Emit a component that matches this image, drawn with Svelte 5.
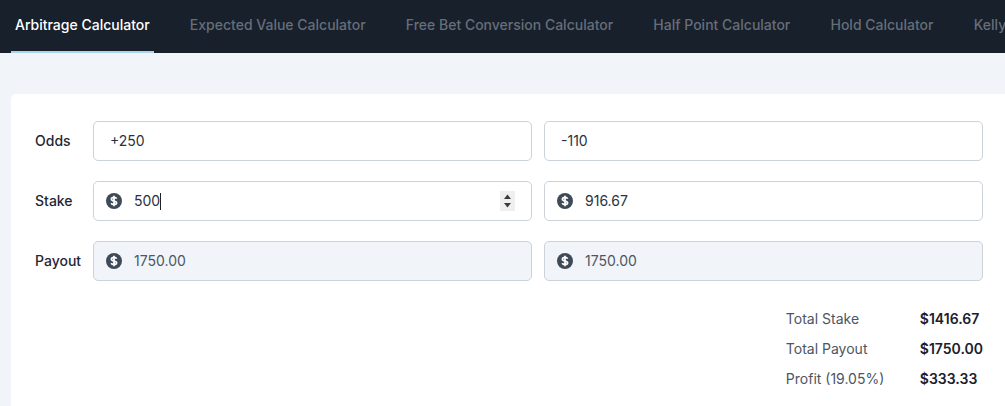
<script lang="ts">
	const tabs = [
		'Arbitrage Calculator',
		'Expected Value Calculator',
		'Free Bet Conversion Calculator',
		'Half Point Calculator',
		'Hold Calculator',
		'Kelly Calculator'
	];

	const rows = [
		{ label: 'Odds', icon: false, disabled: false, values: ['+250', '-110'] },
		{ label: 'Stake', icon: true, disabled: false, values: ['500', '916.67'] },
		{ label: 'Payout', icon: true, disabled: true, values: ['1750.00', '1750.00'] }
	];

	const totals = [
		{ label: 'Total Stake', value: '$1416.67' },
		{ label: 'Total Payout', value: '$1750.00' },
		{ label: 'Profit (19.05%)', value: '$333.33' }
	];
</script>

<nav class="tabs">
	{#each tabs as tab, i}
		<div class="tab" class:active={i === 0}>{tab}</div>
	{/each}
</nav>

<main class="page">
	<section class="card">
		<div class="form">
			{#each rows as row, r}
				<div class="label">{row.label}</div>
				{#each row.values as value, c}
					<div class="field" class:disabled={row.disabled}>
						{#if row.icon}
							<svg class="dollar" viewBox="0 0 16 16" width="16" height="16">
								<circle cx="8" cy="8" r="8" fill="#3f4a59" />
								<path
									d="M10.6 5.8C10.2 4.8 9.2 4.4 8 4.4c-1.5 0-2.6.7-2.6 1.9 0 2.5 5.2 1 5.2 3.5 0 1.2-1.2 1.8-2.6 1.8-1.4 0-2.4-.5-2.8-1.5M8 2.8v10.4"
									fill="none"
									stroke="#fff"
									stroke-width="1.7"
								/>
							</svg>
						{/if}
						<span class="value">{value}</span>
						{#if r === 1 && c === 0}
							<span class="caret"></span>
							<span class="spinner">
								<svg viewBox="0 0 15 20" width="15" height="20">
									<path d="M7.5 3.5 11 8H4z" fill="#3a3a3a" />
									<path d="M7.5 16.5 11 12H4z" fill="#3a3a3a" />
								</svg>
							</span>
						{/if}
					</div>
				{/each}
			{/each}
		</div>

		<div class="totals">
			{#each totals as total}
				<div class="total-label">{total.label}</div>
				<div class="total-value">{total.value}</div>
			{/each}
		</div>
	</section>
</main>

<style>
	:global(body) {
		margin: 0;
		background: #f1f4f9;
		font-family: Inter, 'Liberation Sans', sans-serif;
		overflow: hidden;
	}

	.tabs {
		display: flex;
		height: 53px;
		padding-left: 11px;
		gap: 32.2px;
		background: #18202b;
		overflow: hidden;
		white-space: nowrap;
	}

	.tab {
		flex: none;
		height: 53px;
		padding: 0 4px;
		line-height: 50px;
		font-size: 14px;
		font-weight: 500;
		color: #666e7a;
		box-sizing: border-box;
	}

	.tab.active {
		color: #fff;
		border-bottom: 2px solid #a9d4ee;
	}

	.page {
		padding: 41px 0 0 11px;
	}

	.card {
		background: #fff;
		border-radius: 5px 0 0 0;
		height: 312px;
		padding: 27px 22px 0 24px;
		box-sizing: border-box;
	}

	.form {
		display: grid;
		grid-template-columns: 46px 439px 439px;
		column-gap: 12px;
		row-gap: 20px;
		align-items: center;
	}

	.label {
		font-size: 14px;
		line-height: 20px;
		font-weight: 500;
		color: #1f2733;
		white-space: nowrap;
	}

	.field {
		display: flex;
		align-items: center;
		height: 40px;
		box-sizing: border-box;
		padding: 0 12px;
		border: 1px solid #cbd2da;
		border-radius: 5px;
		background: #fff;
		font-size: 14px;
		line-height: 20px;
		color: #2a323e;
	}

	.field.disabled {
		background: #f1f4f9;
		color: #4d5663;
	}

	.dollar {
		flex: none;
		margin-right: 12px;
	}

	.value {
		margin-left: 4px;
	}

	.dollar + .value {
		margin-left: 0;
	}

	.caret {
		width: 1px;
		height: 17px;
		background: #222;
	}

	.spinner {
		display: flex;
		margin-left: auto;
		margin-right: 4px;
		background: #efefef;
	}

	.totals {
		display: grid;
		grid-template-columns: 134px auto;
		justify-content: end;
		row-gap: 8px;
		margin-top: 27px;
		font-size: 14px;
		line-height: 22px;
	}

	.total-label {
		color: #4d5663;
	}

	.total-value {
		font-weight: 600;
		color: #1a212c;
	}
</style>
